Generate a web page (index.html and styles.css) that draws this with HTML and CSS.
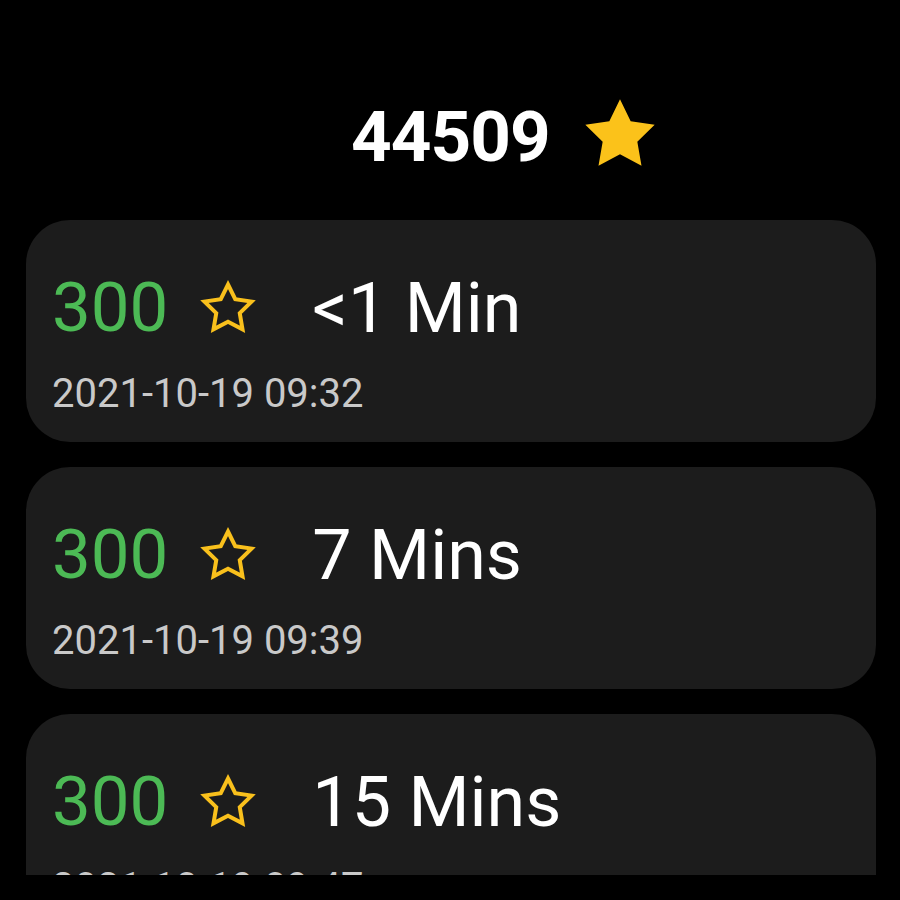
FILE: index.html
```html
<!DOCTYPE html>
<html lang="en">
<head>
    <meta charset="UTF-8">
    <meta name="viewport" content="width=device-width, initial-scale=1.0">
    <title>Stars History</title>
    <link rel="stylesheet" href="styles.css">
</head>
<body>
    <div class="header">
        <span class="total">44509</span>
        <svg class="star-big" viewBox="0 0 24 24"><path d="M12 1.6l3.2 6.6 7.2 1-5.2 5.1 1.25 7.2L12 18.1l-6.45 3.4 1.25-7.2L1.6 9.2l7.2-1z"/></svg>
    </div>

    <div class="list">
        <div class="card">
            <div class="row">
                <span class="points">300</span>
                <svg class="star-small" viewBox="0 0 24 24"><path d="M12 2.6l2.9 5.9 6.5.95-4.7 4.6 1.1 6.5L12 17.5l-5.8 3.05 1.1-6.5-4.7-4.6 6.5-.95z"/></svg>
                <span class="time">&lt;1 Min</span>
            </div>
            <div class="date">2021-10-19 09:32</div>
        </div>
        <div class="card">
            <div class="row">
                <span class="points">300</span>
                <svg class="star-small" viewBox="0 0 24 24"><path d="M12 2.6l2.9 5.9 6.5.95-4.7 4.6 1.1 6.5L12 17.5l-5.8 3.05 1.1-6.5-4.7-4.6 6.5-.95z"/></svg>
                <span class="time">7 Mins</span>
            </div>
            <div class="date">2021-10-19 09:39</div>
        </div>
        <div class="card">
            <div class="row">
                <span class="points">300</span>
                <svg class="star-small" viewBox="0 0 24 24"><path d="M12 2.6l2.9 5.9 6.5.95-4.7 4.6 1.1 6.5L12 17.5l-5.8 3.05 1.1-6.5-4.7-4.6 6.5-.95z"/></svg>
                <span class="time">15 Mins</span>
            </div>
            <div class="date">2021-10-19 09:47</div>
        </div>
    </div>
</body>
</html>
```

FILE: styles.css
```css
/* Global Styles */
* {
    box-sizing: border-box;
    margin: 0;
    padding: 0;
}

body {
    background-color: #000;
    font-family: Roboto, "Noto Sans", sans-serif;
    color: #fff;
    width: 900px;
    height: 900px;
    overflow: hidden;
}

/* Header */
.header {
    display: flex;
    align-items: center;
    height: 220px;
    padding-left: 351px;
    padding-top: 80px;
    padding-bottom: 26px;
}

.total {
    font-size: 71px;
    font-weight: bold;
    line-height: 80px;
    letter-spacing: -1px;
}

.star-big {
    width: 80px;
    height: 80px;
    margin-left: 30px;
    margin-top: -6px;
    fill: #fbc21a;
}

/* List */
.list {
    height: 655px;
    overflow: hidden;
    padding: 0 24px 0 26px;
    display: flex;
    flex-direction: column;
    gap: 25px;
}

.card {
    flex-shrink: 0;
    background-color: #1c1c1c;
    border-radius: 44px;
    padding: 48px 26px 26px 26px;
}

.row {
    display: flex;
    align-items: center;
    height: 80px;
}

.points {
    font-size: 69px;
    line-height: 80px;
    color: #4cba55;
}

.star-small {
    width: 60px;
    height: 60px;
    margin-left: 30px;
    fill: none;
    stroke: #f9c01c;
    stroke-width: 1.6;
    stroke-linejoin: miter;
}

.time {
    font-size: 70px;
    line-height: 80px;
    margin-left: 54px;
}

.date {
    margin-top: 24px;
    font-size: 40px;
    line-height: 44px;
    color: #c9c9c9;
}
```
